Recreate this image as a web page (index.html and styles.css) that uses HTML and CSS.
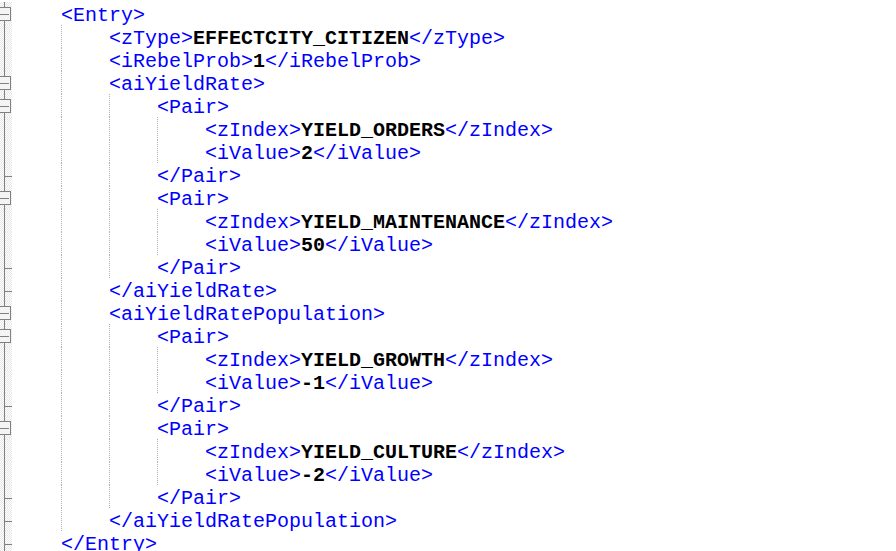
FILE: index.html
```html
<!DOCTYPE html>
<html>
<head>
<meta charset="utf-8">
<link rel="stylesheet" href="styles.css">
<title>XML</title>
</head>
<body>
<div class="editor">
  <div class="ln"><span class="fm"><svg width="12" height="23"><line class="v" x1="4.5" y1="0" x2="4.5" y2="23"/><rect class="bx" x="-1.5" y="5.5" width="12" height="13"/><line class="m" x1="0" y1="12.5" x2="9" y2="12.5"/></svg></span><span class="ind"></span><span class="t"><span class="tg">&lt;Entry&gt;</span></span></div>
  <div class="ln"><span class="fm"><svg width="12" height="23"><line class="v" x1="4.5" y1="0" x2="4.5" y2="23"/></svg></span><span class="ind"></span><span class="ind g"></span><span class="t"><span class="tg">&lt;zType&gt;</span><b>EFFECTCITY_CITIZEN</b><span class="tg">&lt;/zType&gt;</span></span></div>
  <div class="ln"><span class="fm"><svg width="12" height="23"><line class="v" x1="4.5" y1="0" x2="4.5" y2="23"/></svg></span><span class="ind"></span><span class="ind g"></span><span class="t"><span class="tg">&lt;iRebelProb&gt;</span><b>1</b><span class="tg">&lt;/iRebelProb&gt;</span></span></div>
  <div class="ln"><span class="fm"><svg width="12" height="23"><line class="v" x1="4.5" y1="0" x2="4.5" y2="23"/><rect class="bx" x="-1.5" y="5.5" width="12" height="13"/><line class="m" x1="0" y1="12.5" x2="9" y2="12.5"/></svg></span><span class="ind"></span><span class="ind g"></span><span class="t"><span class="tg">&lt;aiYieldRate&gt;</span></span></div>
  <div class="ln"><span class="fm"><svg width="12" height="23"><line class="v" x1="4.5" y1="0" x2="4.5" y2="23"/><rect class="bx" x="-1.5" y="5.5" width="12" height="13"/><line class="m" x1="0" y1="12.5" x2="9" y2="12.5"/></svg></span><span class="ind"></span><span class="ind g"></span><span class="ind g"></span><span class="t"><span class="tg">&lt;Pair&gt;</span></span></div>
  <div class="ln"><span class="fm"><svg width="12" height="23"><line class="v" x1="4.5" y1="0" x2="4.5" y2="23"/></svg></span><span class="ind"></span><span class="ind g"></span><span class="ind g"></span><span class="ind g"></span><span class="t"><span class="tg">&lt;zIndex&gt;</span><b>YIELD_ORDERS</b><span class="tg">&lt;/zIndex&gt;</span></span></div>
  <div class="ln"><span class="fm"><svg width="12" height="23"><line class="v" x1="4.5" y1="0" x2="4.5" y2="23"/></svg></span><span class="ind"></span><span class="ind g"></span><span class="ind g"></span><span class="ind g"></span><span class="t"><span class="tg">&lt;iValue&gt;</span><b>2</b><span class="tg">&lt;/iValue&gt;</span></span></div>
  <div class="ln"><span class="fm"><svg width="12" height="23"><line class="v" x1="4.5" y1="0" x2="4.5" y2="23"/><line class="k" x1="4" y1="13.5" x2="12" y2="13.5"/></svg></span><span class="ind"></span><span class="ind g"></span><span class="ind g"></span><span class="t"><span class="tg">&lt;/Pair&gt;</span></span></div>
  <div class="ln"><span class="fm"><svg width="12" height="23"><line class="v" x1="4.5" y1="0" x2="4.5" y2="23"/><rect class="bx" x="-1.5" y="5.5" width="12" height="13"/><line class="m" x1="0" y1="12.5" x2="9" y2="12.5"/></svg></span><span class="ind"></span><span class="ind g"></span><span class="ind g"></span><span class="t"><span class="tg">&lt;Pair&gt;</span></span></div>
  <div class="ln"><span class="fm"><svg width="12" height="23"><line class="v" x1="4.5" y1="0" x2="4.5" y2="23"/></svg></span><span class="ind"></span><span class="ind g"></span><span class="ind g"></span><span class="ind g"></span><span class="t"><span class="tg">&lt;zIndex&gt;</span><b>YIELD_MAINTENANCE</b><span class="tg">&lt;/zIndex&gt;</span></span></div>
  <div class="ln"><span class="fm"><svg width="12" height="23"><line class="v" x1="4.5" y1="0" x2="4.5" y2="23"/></svg></span><span class="ind"></span><span class="ind g"></span><span class="ind g"></span><span class="ind g"></span><span class="t"><span class="tg">&lt;iValue&gt;</span><b>50</b><span class="tg">&lt;/iValue&gt;</span></span></div>
  <div class="ln"><span class="fm"><svg width="12" height="23"><line class="v" x1="4.5" y1="0" x2="4.5" y2="23"/><line class="k" x1="4" y1="13.5" x2="12" y2="13.5"/></svg></span><span class="ind"></span><span class="ind g"></span><span class="ind g"></span><span class="t"><span class="tg">&lt;/Pair&gt;</span></span></div>
  <div class="ln"><span class="fm"><svg width="12" height="23"><line class="v" x1="4.5" y1="0" x2="4.5" y2="23"/><line class="k" x1="4" y1="13.5" x2="12" y2="13.5"/></svg></span><span class="ind"></span><span class="ind g"></span><span class="t"><span class="tg">&lt;/aiYieldRate&gt;</span></span></div>
  <div class="ln"><span class="fm"><svg width="12" height="23"><line class="v" x1="4.5" y1="0" x2="4.5" y2="23"/><rect class="bx" x="-1.5" y="5.5" width="12" height="13"/><line class="m" x1="0" y1="12.5" x2="9" y2="12.5"/></svg></span><span class="ind"></span><span class="ind g"></span><span class="t"><span class="tg">&lt;aiYieldRatePopulation&gt;</span></span></div>
  <div class="ln"><span class="fm"><svg width="12" height="23"><line class="v" x1="4.5" y1="0" x2="4.5" y2="23"/><rect class="bx" x="-1.5" y="5.5" width="12" height="13"/><line class="m" x1="0" y1="12.5" x2="9" y2="12.5"/></svg></span><span class="ind"></span><span class="ind g"></span><span class="ind g"></span><span class="t"><span class="tg">&lt;Pair&gt;</span></span></div>
  <div class="ln"><span class="fm"><svg width="12" height="23"><line class="v" x1="4.5" y1="0" x2="4.5" y2="23"/></svg></span><span class="ind"></span><span class="ind g"></span><span class="ind g"></span><span class="ind g"></span><span class="t"><span class="tg">&lt;zIndex&gt;</span><b>YIELD_GROWTH</b><span class="tg">&lt;/zIndex&gt;</span></span></div>
  <div class="ln"><span class="fm"><svg width="12" height="23"><line class="v" x1="4.5" y1="0" x2="4.5" y2="23"/></svg></span><span class="ind"></span><span class="ind g"></span><span class="ind g"></span><span class="ind g"></span><span class="t"><span class="tg">&lt;iValue&gt;</span><b>-1</b><span class="tg">&lt;/iValue&gt;</span></span></div>
  <div class="ln"><span class="fm"><svg width="12" height="23"><line class="v" x1="4.5" y1="0" x2="4.5" y2="23"/><line class="k" x1="4" y1="13.5" x2="12" y2="13.5"/></svg></span><span class="ind"></span><span class="ind g"></span><span class="ind g"></span><span class="t"><span class="tg">&lt;/Pair&gt;</span></span></div>
  <div class="ln"><span class="fm"><svg width="12" height="23"><line class="v" x1="4.5" y1="0" x2="4.5" y2="23"/><rect class="bx" x="-1.5" y="5.5" width="12" height="13"/><line class="m" x1="0" y1="12.5" x2="9" y2="12.5"/></svg></span><span class="ind"></span><span class="ind g"></span><span class="ind g"></span><span class="t"><span class="tg">&lt;Pair&gt;</span></span></div>
  <div class="ln"><span class="fm"><svg width="12" height="23"><line class="v" x1="4.5" y1="0" x2="4.5" y2="23"/></svg></span><span class="ind"></span><span class="ind g"></span><span class="ind g"></span><span class="ind g"></span><span class="t"><span class="tg">&lt;zIndex&gt;</span><b>YIELD_CULTURE</b><span class="tg">&lt;/zIndex&gt;</span></span></div>
  <div class="ln"><span class="fm"><svg width="12" height="23"><line class="v" x1="4.5" y1="0" x2="4.5" y2="23"/></svg></span><span class="ind"></span><span class="ind g"></span><span class="ind g"></span><span class="ind g"></span><span class="t"><span class="tg">&lt;iValue&gt;</span><b>-2</b><span class="tg">&lt;/iValue&gt;</span></span></div>
  <div class="ln"><span class="fm"><svg width="12" height="23"><line class="v" x1="4.5" y1="0" x2="4.5" y2="23"/><line class="k" x1="4" y1="13.5" x2="12" y2="13.5"/></svg></span><span class="ind"></span><span class="ind g"></span><span class="ind g"></span><span class="t"><span class="tg">&lt;/Pair&gt;</span></span></div>
  <div class="ln"><span class="fm"><svg width="12" height="23"><line class="v" x1="4.5" y1="0" x2="4.5" y2="23"/><line class="k" x1="4" y1="13.5" x2="12" y2="13.5"/></svg></span><span class="ind"></span><span class="ind g"></span><span class="t"><span class="tg">&lt;/aiYieldRatePopulation&gt;</span></span></div>
  <div class="ln"><span class="fm"><svg width="12" height="23"><line class="v" x1="4.5" y1="0" x2="4.5" y2="23"/><line class="k" x1="4" y1="13.5" x2="12" y2="13.5"/></svg></span><span class="ind"></span><span class="t"><span class="tg">&lt;/Entry&gt;</span></span></div>
</div>
</body>
</html>
```

FILE: styles.css
```css
html, body {
  margin: 0;
  padding: 0;
  background: #ffffff;
  width: 896px;
  height: 551px;
  overflow: hidden;
}

.editor {
  display: flex;
  flex-direction: column;
  padding-top: 2px;
  font-family: "Liberation Mono", "Courier New", monospace;
  font-size: 20px;
  line-height: 23px;
}

.ln {
  display: flex;
  align-items: flex-start;
  height: 23px;
  white-space: pre;
}

.fm {
  flex: none;
  width: 12px;
  height: 23px;
  margin-right: 1px;
  background-color: #ffffff;
  background-image: repeating-conic-gradient(#e6e6e6 0 25%, #ffffff 0 50%);
  background-size: 2px 2px;
}

.fm svg {
  display: block;
  overflow: hidden;
  shape-rendering: crispEdges;
}

.fm .v,
.fm .k,
.fm .m {
  stroke: #808080;
  stroke-width: 1;
}

.fm .bx {
  fill: #f4f4f4;
  stroke: #808080;
  stroke-width: 1;
}

.ind {
  flex: none;
  width: 48px;
  height: 23px;
  box-sizing: border-box;
}

.ind.g {
  border-left: 1px dotted #b0b0b0;
}

.t {
  flex: none;
  line-height: 27px;
}

.tg {
  color: #0000ff;
}

.t b {
  color: #000000;
  font-weight: bold;
}
```
